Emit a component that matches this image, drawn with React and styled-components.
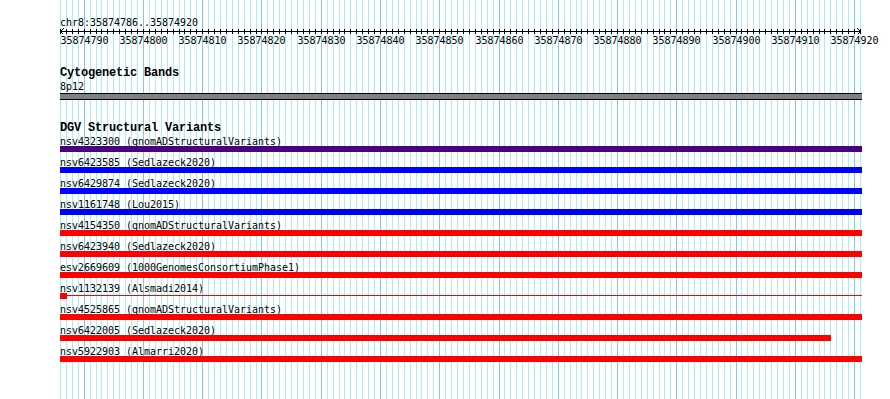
import React from "react";
import styled, { createGlobalStyle } from "styled-components";

const START = 35874786;
const END = 35874920;
const LEFT = 60;
const SPAN = 800;
const BASES = END - START + 1;
const TRACK_W = 802;
const scale = SPAN / BASES;

const xOf = (pos) => Math.round((pos - START) * scale);

const variants = [
  { name: "nsv4323300", study: "gnomADStructuralVariants", color: "#4b0082" },
  { name: "nsv6423585", study: "Sedlazeck2020", color: "#0000ff" },
  { name: "nsv6429874", study: "Sedlazeck2020", color: "#0000ff" },
  { name: "nsv1161748", study: "Lou2015", color: "#0000ff" },
  { name: "nsv4154350", study: "gnomADStructuralVariants", color: "#ff0000" },
  { name: "nsv6423940", study: "Sedlazeck2020", color: "#ff0000" },
  { name: "esv2669609", study: "1000GenomesConsortiumPhase1", color: "#ff0000" },
  { name: "nsv1132139", study: "Alsmadi2014", color: "#ff0000", end: START, tail: true },
  { name: "nsv4525865", study: "gnomADStructuralVariants", color: "#ff0000" },
  { name: "nsv6422005", study: "Sedlazeck2020", color: "#ff0000", end: 35874915 },
  { name: "nsv5922903", study: "Almarri2020", color: "#ff0000" },
];

const GlobalStyle = createGlobalStyle`
  html, body {
    margin: 0;
    padding: 0;
    background: #ffffff;
  }
`;

const Canvas = styled.div`
  position: relative;
  width: 890px;
  height: 399px;
  overflow: hidden;
  background: #ffffff;
  color: #000000;
`;

const GridLayer = styled.svg`
  position: absolute;
  top: 0;
  left: 0;
  z-index: 0;
  pointer-events: none;
`;

const Content = styled.div`
  position: relative;
  z-index: 1;
  display: flex;
  flex-direction: column;
  padding: 16px 0 0 ${LEFT}px;
`;

const Text = styled.div`
  font-family: "DejaVu Sans Mono", "Liberation Mono", monospace;
  font-size: 10px;
  line-height: 13px;
  height: ${(p) => p.$h || 12}px;
  letter-spacing: -0.02px;
  white-space: pre;
`;

const Title = styled.div`
  font-family: "Liberation Mono", "DejaVu Sans Mono", monospace;
  font-weight: bold;
  font-size: 12px;
  line-height: 14px;
  height: 14px;
  letter-spacing: -0.2px;
  white-space: pre;
  margin-top: ${(p) => p.$gap}px;
`;

const RulerAxis = styled.svg`
  display: block;
`;

const TickLabels = styled.div`
  position: relative;
  width: ${TRACK_W}px;
  height: 12px;
`;

const TickLabel = styled.span`
  position: absolute;
  top: 0;
  transform: translateX(-50%);
  font-family: "DejaVu Sans Mono", "Liberation Mono", monospace;
  font-size: 10px;
  line-height: 13px;
  letter-spacing: -0.02px;
  white-space: pre;
`;

const Band = styled.div`
  width: ${TRACK_W}px;
  height: 5px;
  margin-top: 1px;
  background: #808080;
  border-top: 1px solid #000000;
  border-bottom: 1px solid #000000;
`;

const Row = styled.div`
  display: flex;
  flex-direction: column;
  padding-bottom: 4px;
`;

const Track = styled.div`
  display: flex;
  align-items: flex-start;
  width: ${TRACK_W}px;
  height: 6px;
`;

const Bar = styled.div`
  flex: none;
  height: 6px;
  background: ${(p) => p.$color};
`;

const Connector = styled.div`
  flex: 1;
  height: 1px;
  margin-top: 2px;
  background: ${(p) => p.$color};
`;

function Grid() {
  const lines = [];
  for (let pos = START; pos <= END + 1; pos++) {
    lines.push(
      <rect
        key={pos}
        x={LEFT + xOf(pos)}
        y={0}
        width={1}
        height={399}
        fill={pos % 10 === 0 ? "#7fc8f0" : "#a9eef1"}
      />
    );
  }
  return (
    <GridLayer width={890} height={399} shapeRendering="crispEdges">
      {lines}
    </GridLayer>
  );
}

function Ruler() {
  const ticks = [];
  for (let pos = START; pos <= END + 1; pos++) {
    ticks.push(<rect key={pos} x={xOf(pos)} y={1} width={1} height={5} fill="#000" />);
  }
  const labels = [];
  for (let pos = 35874790; pos <= END; pos += 10) labels.push(pos);
  return (
    <>
      <RulerAxis width={TRACK_W} height={6} shapeRendering="crispEdges">
        <rect x={0} y={3} width={TRACK_W - 1} height={1} fill="#000" />
        {ticks}
        <path d="M3.5 0.5 L0.5 3.5 L3.5 6.5" stroke="#000" fill="none" />
        <path d="M797.5 0.5 L800.5 3.5 L797.5 6.5" stroke="#000" fill="none" />
      </RulerAxis>
      <TickLabels>
        {labels.map((pos) => (
          <TickLabel key={pos} style={{ left: xOf(pos) + 0.5 }}>
            {pos}
          </TickLabel>
        ))}
      </TickLabels>
    </>
  );
}

function VariantRow({ v }) {
  const right = v.end ? Math.round((v.end - START + 1) * scale) + 1 : TRACK_W;
  return (
    <Row>
      <Text $h={11}>{`${v.name} (${v.study})`}</Text>
      <Track>
        <Bar $color={v.color} style={{ width: Math.min(right, TRACK_W) }} />
        {v.tail && <Connector $color={v.color} />}
      </Track>
    </Row>
  );
}

export default function App() {
  return (
    <>
      <GlobalStyle />
      <Canvas>
        <Grid />
        <Content>
          <Text>chr8:35874786..35874920</Text>
          <Ruler />
          <Title $gap={20}>Cytogenetic Bands</Title>
          <Text>8p12</Text>
          <Band />
          <Title $gap={21}>DGV Structural Variants</Title>
          {variants.map((v) => (
            <VariantRow key={v.name} v={v} />
          ))}
        </Content>
      </Canvas>
    </>
  );
}
